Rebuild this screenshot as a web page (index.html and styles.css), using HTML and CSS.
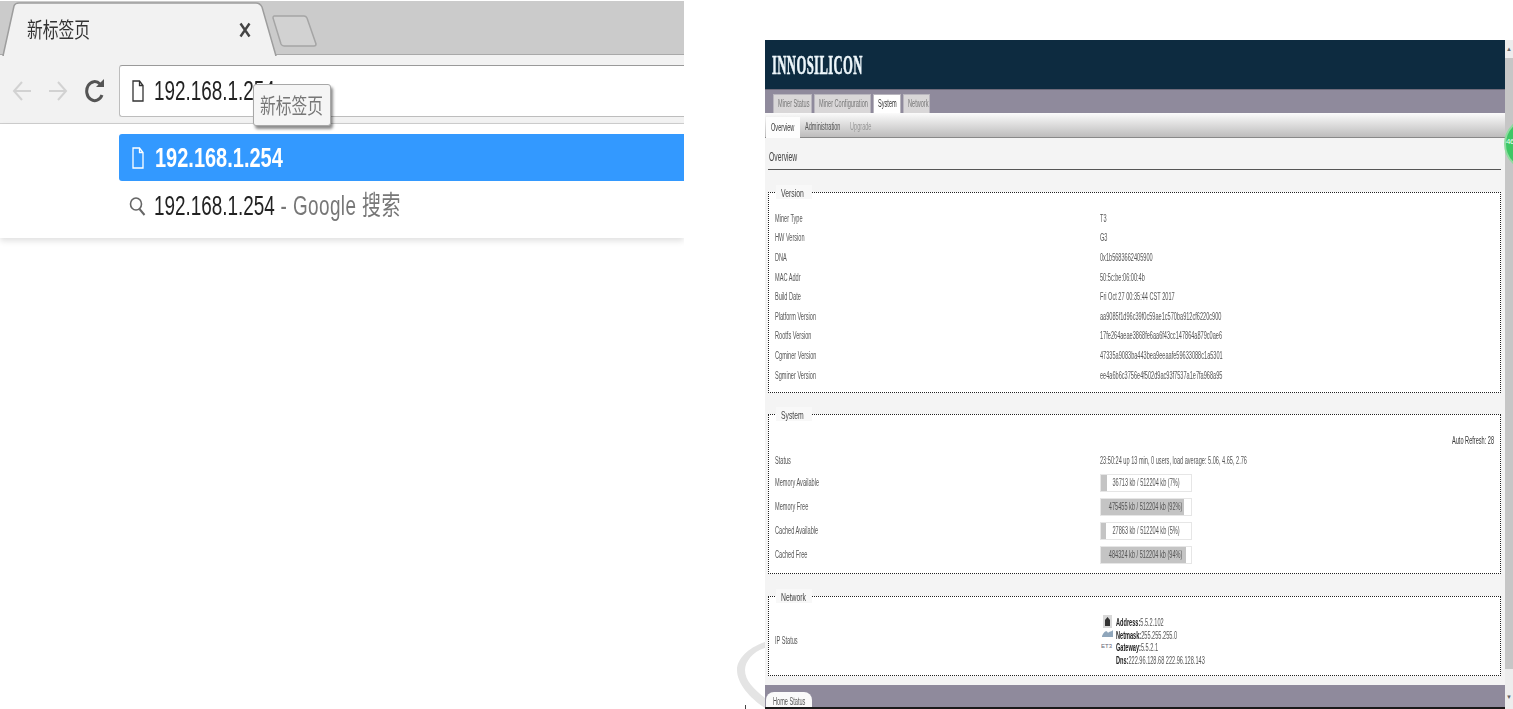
FILE: index.html
```html
<!DOCTYPE html>
<html lang="zh">
<head>
<meta charset="utf-8">
<title>INNOSILICON</title>
<link rel="stylesheet" href="styles.css">
</head>
<body>
<section class="browser">
  <div class="tabstrip">
    <svg class="tabshape" width="684" height="56" viewBox="0 0 684 56">
      <path d="M0 54.5H684" stroke="#a9a9a9" fill="none"/>
      <path d="M3 56 L14 6 Q15 3 19 3 H256 Q260 3 262 7 L276 56 Z" fill="#f2f2f2" stroke="#9d9d9d" stroke-width="1.500"/>
      <path d="M4 56H275" stroke="#f2f2f2" stroke-width="2"/>
      <path d="M274 16 H304 Q306 16 307 18 L316 44 Q316 46 314 46 H284 Q282 46 281 44 L273 18 Q273 16 274 16Z" fill="#d2d2d2" stroke="#a5a5a5" stroke-width="1.500"/>
    </svg>
    <span class="tabtitle"><span class="cn">新标签页</span></span>
    <svg class="tabclose" width="12" height="16" viewBox="0 0 12 16"><path d="M1.500 1.500L10.500 14.500M10.500 1.500L1.500 14.500" stroke="#444" stroke-width="2.400"/></svg>
  </div>
  <div class="toolbar">
    <svg class="navicon" width="20" height="24" viewBox="0 0 20 24"><path d="M19 12H2M10 3L2 12L10 21" fill="none" stroke="#d2d2d2" stroke-width="2"/></svg>
    <svg class="navicon fwd" width="20" height="24" viewBox="0 0 20 24"><path d="M1 12H18M10 3L18 12L10 21" fill="none" stroke="#d2d2d2" stroke-width="2"/></svg>
    <svg class="navicon reload" width="20" height="26" viewBox="0 0 20 26"><path d="M17 17A8 9.500 0 1 1 15 6" fill="none" stroke="#555" stroke-width="3"/><path d="M11 9H19V1Z" fill="#555"/></svg>
    <div class="omnibox">
      <svg width="12" height="22" viewBox="0 0 12 22"><path d="M1 1H7.500L11 5.500V21H1Z M7.500 1V5.500H11" fill="none" stroke="#333" stroke-width="1.300"/></svg>
      <span class="addr">192.168.1.254</span>
    </div>
  </div>
  <div class="tooltip"><span class="cn">新标签页</span></div>
  <div class="dropdown">
    <div class="suggest active">
      <svg width="12" height="22" viewBox="0 0 12 22"><path d="M1 1H7.500L11 5.500V21H1Z M7.500 1V5.500H11" fill="none" stroke="#fff" stroke-width="1.300"/></svg>
      <span class="addr bold">192.168.1.254</span>
    </div>
    <div class="suggest">
      <svg width="17" height="19" viewBox="0 0 17 19"><ellipse cx="7" cy="7" rx="5.500" ry="6" fill="none" stroke="#666" stroke-width="1.600"/><path d="M10.500 12L15.500 18" stroke="#666" stroke-width="2"/></svg>
      <span class="addr">192.168.1.254<span class="muted"> - Google 搜索</span></span>
    </div>
  </div>
</section>

<svg class="curve" width="30" height="72" viewBox="0 0 30 72"><path d="M29 3 C12 9 1 20 1 31 C1 45 15 60 29 69 L29 59 C18 50 9 42 9 31 C9 22 18 12 29 9 Z" fill="#e4e4e4"/></svg>
<span class="ticks"></span>

<section class="panel">
  <div class="main">
    <header class="brand"><span class="logo">INNOSILICON</span></header>
    <nav class="topnav">
      <a class="toptab w38"><span class="t">Miner Status</span></a>
      <a class="toptab w56"><span class="t">Miner Configuration</span></a>
      <a class="toptab w28 on"><span class="t">System</span></a>
      <a class="toptab w27"><span class="t">Network</span></a>
    </nav>
    <nav class="subnav">
      <a class="subtab on"><span class="t">Overview</span></a>
      <a class="sublink w45"><span class="t">Administration</span></a>
      <a class="sublink"><span class="t pale">Upgrade</span></a>
    </nav>
    <div class="content">
      <h2 class="title"><span class="t">Overview</span></h2>
      <fieldset class="group first">
        <legend><span class="t">Version</span></legend>
        <div class="row"><span class="t">Miner Type</span><span class="t">T3</span></div>
        <div class="row"><span class="t">HW Version</span><span class="t">G3</span></div>
        <div class="row"><span class="t">DNA</span><span class="t">0x1b5683662405900</span></div>
        <div class="row"><span class="t">MAC Addr</span><span class="t">50:5c:be:06:00:4b</span></div>
        <div class="row"><span class="t">Build Date</span><span class="t">Fri Oct 27 00:35:44 CST 2017</span></div>
        <div class="row"><span class="t">Platform Version</span><span class="t">aa9085f1d96c39f0c59ae1c570ba912cf6220c900</span></div>
        <div class="row"><span class="t">Rootfs Version</span><span class="t">17fe264aeae3868fe6aa6f43cc147864a879c0ae6</span></div>
        <div class="row"><span class="t">Cgminer Version</span><span class="t">47335a9083ba443bea9eeaafe59633088c1a5301</span></div>
        <div class="row"><span class="t">Sgminer Version</span><span class="t">ee4a6b6c3756e4f502d9ac93f7537a1e7fa968a95</span></div>
      </fieldset>
      <fieldset class="group sys">
        <legend><span class="t">System</span></legend>
        <div class="refresh"><span class="t">Auto Refresh: 28</span></div>
        <div class="row status"><span class="t">Status</span><span class="t">23:50:24 up 13 min, 0 users, load average: 5.06, 4.65, 2.76</span></div>
        <div class="row barrow"><span class="t">Memory Available</span>
          <div class="bar"><i class="fill" style="width:7%"></i><span class="t">36713 kb / 512204 kb (7%)</span></div></div>
        <div class="row barrow"><span class="t">Memory Free</span>
          <div class="bar"><i class="fill" style="width:92%"></i><span class="t">475455 kb / 512204 kb (92%)</span></div></div>
        <div class="row barrow"><span class="t">Cached Available</span>
          <div class="bar"><i class="fill" style="width:5%"></i><span class="t">27863 kb / 512204 kb (5%)</span></div></div>
        <div class="row barrow"><span class="t">Cached Free</span>
          <div class="bar"><i class="fill" style="width:94%"></i><span class="t">484324 kb / 512204 kb (94%)</span></div></div>
      </fieldset>
      <fieldset class="group net">
        <legend><span class="t">Network</span></legend>
        <div class="row netrow"><span class="t iplabel">IP Status</span>
          <div class="ipinfo">
            <svg class="ethicon" width="13" height="34" viewBox="0 0 13 34">
              <rect x="2" y="0" width="9" height="13" fill="#d8d8d8"/>
              <path d="M6.500 2L9 5V11H4V5Z" fill="#333"/>
              <path d="M1 21C3 16 6 15 7 18C8 16 11 17 12 15V22H1Z" fill="#8fa6bb"/>
              <text x="0" y="33" class="ethlabel">ET3</text>
            </svg>
            <div class="iplines">
              <div><span class="t"><b>Address:</b>5.5.2.102</span></div>
              <div><span class="t"><b>Netmask:</b>255.255.255.0</span></div>
              <div><span class="t"><b>Gateway:</b>5.5.2.1</span></div>
              <div><span class="t"><b>Dns:</b>222.96.128.68 222.96.128.143</span></div>
            </div>
          </div>
        </div>
      </fieldset>
    </div>
    <footer class="footnav"><a class="foottab"><span class="t">Home Status</span></a></footer>
  </div>
  <aside class="scrollbar">
    <span class="sbtn">▲</span>
    <span class="thumb"></span>
    <span class="sbtn low">▼</span>
  </aside>
  <div class="badge">46</div>
</section>
</body>
</html>
```

FILE: styles.css
```css
* { box-sizing: border-box; }
html, body { margin: 0; height: 709px; overflow: hidden; background: #fff; }
body {
  position: relative;
  display: flex;
  justify-content: space-between;
  font-family: "Liberation Sans", "Noto Sans CJK SC", sans-serif;
}

/* left: browser capture */
.browser { position: relative; width: 684px; height: 250px; padding-top: 1px; overflow: hidden; }
.tabstrip { position: relative; height: 54px; background: #cbcbcb; display: flex; align-items: center; }
.tabshape { position: absolute; left: 0; top: -1px; }
.cn {
  display: inline-block;
  font-size: 21px;
  line-height: 24px;
  white-space: nowrap;
  transform: scaleX(.75);
  transform-origin: 0 50%;
  filter: blur(.3px);
}
.tabtitle { position: relative; margin-left: 27px; margin-top: 4px; width: 204px; color: #333; }
.tabclose { position: relative; margin-top: 4px; margin-left: 8px; }
.toolbar {
  height: 69px;
  padding: 10px 0 0 12px;
  background: #f2f2f2;
  border-bottom: 1px solid #cfcfcf;
  display: flex;
  align-items: flex-start;
}
.navicon { margin-top: 14px; flex: none; }
.fwd { margin-left: 16px; }
.reload { margin-left: 17px; margin-top: 13px; }
.omnibox {
  margin-left: 14px;
  flex: 1;
  height: 52px;
  background: #fff;
  border: 1px solid #bdbdbd;
  border-top-color: #9a9a9a;
  border-right: 0;
  border-radius: 3px 0 0 3px;
  display: flex;
  align-items: center;
  padding-left: 12px;
  gap: 10px;
}
.addr {
  display: inline-block;
  font-size: 27px;
  line-height: 32px;
  color: #222;
  white-space: nowrap;
  transform: scaleX(.70);
  transform-origin: 0 50%;
  filter: blur(.3px);
}
.bold { font-weight: 700; color: #fff; transform: scaleX(.74); }
.muted { color: #777; letter-spacing: .6px; }
.tooltip {
  position: absolute;
  left: 253px;
  top: 84px;
  width: 78px;
  height: 42px;
  background: #f5f5f5;
  border: 1px solid #a8a8a8;
  border-radius: 3px;
  box-shadow: 2px 3px 3px rgba(0,0,0,.45);
  padding: 9px 0 0 6px;
  color: #777;
}
.dropdown {
  height: 114px;
  padding: 10px 0 0 119px;
  background: #fff;
  box-shadow: 0 3px 6px rgba(0,0,0,.12);
}
.suggest { height: 48px; display: flex; align-items: center; padding-left: 13px; gap: 10px; }
.suggest svg { flex: none; }
.suggest:last-child { padding-left: 10px; gap: 8px; }
.active { background: #3399ff; border-radius: 3px 0 0 3px; height: 47px; margin-bottom: 1px; gap: 11px; }

.curve { position: absolute; left: 736px; top: 639px; }
.ticks { position: absolute; left: 745px; top: 705px; width: 1px; height: 4px; background: #444; }

/* right: miner admin capture */
.t {
  display: inline-block;
  font-size: 10px;
  line-height: 12px;
  color: #555;
  white-space: nowrap;
  transform: scaleX(.56);
  transform-origin: 0 50%;
  filter: blur(.3px);
}
.panel { position: relative; width: 748px; height: 669px; margin-top: 40px; display: flex; background: #f4f4f4; }
.main { width: 740px; display: flex; flex-direction: column; }
.brand { height: 49px; background: #0d2b40; display: flex; align-items: center; padding: 2px 0 0 7px; flex: none; }
.logo {
  display: inline-block;
  font-family: "Liberation Serif", serif;
  font-weight: 700;
  font-size: 27px;
  letter-spacing: .8px;
  color: #eef7fb;
  -webkit-text-stroke: .6px #eef7fb;
  white-space: nowrap;
  transform: scaleX(.47);
  transform-origin: 0 50%;
}
.topnav {
  height: 24px;
  background: #8f8a9c;
  border-top: 1px solid #6e6a7a;
  padding: 4px 0 0 8px;
  display: flex;
  gap: 2px;
  flex: none;
}
.toptab {
  height: 19px;
  background: #d9d7d8;
  border: 1px solid #b9b6be;
  border-bottom: 0;
  padding-left: 4px;
  display: flex;
  align-items: center;
  overflow: hidden;
  flex: none;
}
.toptab.on { background: #fff; }
.toptab .t { color: #777; }
.toptab.on .t { color: #333; }
.w38 { width: 39px; }
.w56 { width: 57px; }
.w28 { width: 28px; }
.w27 { width: 27px; }
.subnav {
  height: 25px;
  background: linear-gradient(#fbfbfb, #bdbcbc);
  border-bottom: 1px solid #888;
  padding: 4px 0 0 1px;
  display: flex;
  flex: none;
}
.subtab {
  width: 34px;
  height: 21px;
  background: #fdfdfd;
  padding-left: 5px;
  display: flex;
  align-items: center;
  flex: none;
}
.subtab .t { color: #333; }
.sublink { width: 45px; padding-left: 5px; display: flex; align-items: center; flex: none; }
.sublink.w45 { width: 45px; }
.pale { color: #999; }
.content { flex: 1; min-height: 0; padding: 0 4px 0 3px; }
.title {
  margin: 0 0 15px;
  height: 32px;
  padding: 12px 0 0 1px;
  border-bottom: 1px solid #555;
  font-weight: 400;
  display: flex;
  align-items: flex-start;
}
.title .t { font-size: 13px; line-height: 14px; transform: scaleX(.52); color: #444; }
.group {
  margin: 14px 0 0;
  padding: 10px 6px 7px;
  min-width: 0;
  border: 1px dotted #222;
  background: #fff;
}
.group.first { margin-top: 0; }
.group.sys { padding-bottom: 6px; }
.group.net { margin-top: 15px; padding: 12px 6px 11px; }
.group legend {
  margin-left: 1px;
  padding: 0 0 0 5px;
  width: 36px;
  height: 14px;
  line-height: 14px;
  background: #f8f8f8;
}
.group legend .t { font-size: 11px; transform: scaleX(.62); color: #444; }
.row {
  display: grid;
  grid-template-columns: 325px 1fr;
  height: 19.6px;
  align-items: center;
  overflow: hidden;
}
.refresh { height: 20px; text-align: right; line-height: 16px; }
.refresh .t { color: #333; transform-origin: 100% 50%; }
.status { height: 20px; }
.barrow { height: 24px; }
.bar {
  position: relative;
  width: 92px;
  height: 18px;
  background: #fff;
  border: 1px solid #e6e6e6;
  display: flex;
  justify-content: center;
  align-items: center;
}
.bar .t { position: relative; transform-origin: 50% 50%; flex: none; }
.fill { position: absolute; left: 0; top: 0; bottom: 0; background: #c4c4c4; }
.netrow { height: 49px; }
.iplabel { margin-top: 3px; }
.ipinfo { display: flex; align-items: flex-start; gap: 2px; margin-left: 1px; height: 49px; }
.ethicon { flex: none; }
.ethlabel { font-size: 6px; fill: #667; }
.iplines div { height: 12.4px; line-height: 12px; }
.iplines .t { color: #555; white-space: nowrap; }
.iplines b { color: #222; }
.footnav {
  height: 24px;
  flex: none;
  background: #8f8a9c;
  border-bottom: 2px solid #1a1a1a;
  padding: 7px 0 0 1px;
  overflow: hidden;
}
.foottab {
  display: flex;
  align-items: center;
  width: 46px;
  height: 20px;
  padding-left: 7px;
  background: #fafafa;
  border-radius: 8px 8px 0 0;
}
.scrollbar { width: 8px; display: flex; flex-direction: column; background: #ededed; }
.sbtn { height: 18px; font-size: 6px; line-height: 18px; text-align: center; color: #666; flex: none; }
.thumb { flex: 1; background: #c6c6c6; margin-bottom: 1px; }
.sbtn.low { height: 39px; line-height: 55px; }
.badge {
  position: absolute;
  left: 739px;
  top: 77px;
  width: 54px;
  height: 54px;
  border-radius: 50%;
  background: #3ec766;
  border: 2px solid #8edc9f;
  color: #e9fff0;
  font-size: 8px;
  letter-spacing: -.5px;
  line-height: 46px;
}
```
